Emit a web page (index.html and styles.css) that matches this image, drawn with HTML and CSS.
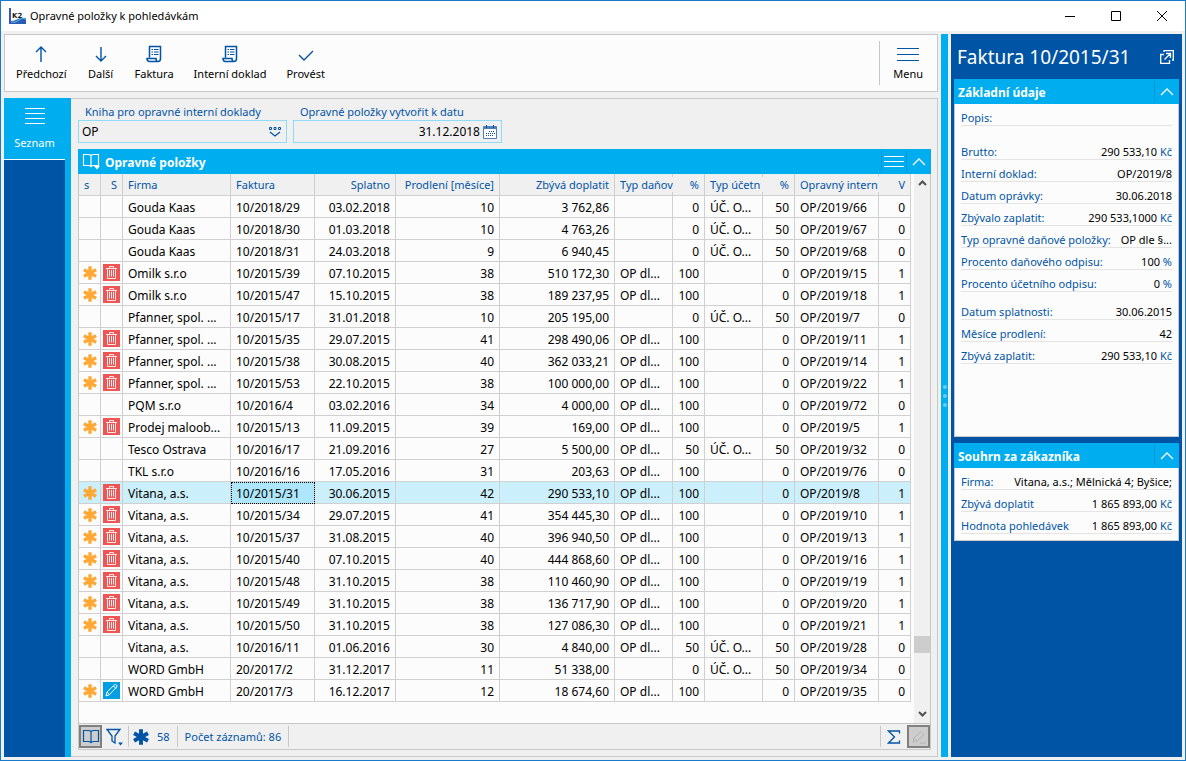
FILE: index.html
```html
<!DOCTYPE html>
<html lang="cs">
<head>
<meta charset="utf-8">
<meta name="viewport" content="width=device-width, initial-scale=1">
<title>Opravné položky k pohledávkám</title>
<link rel="stylesheet" href="styles.css">
</head>
<body>
<svg class="sprite" aria-hidden="true">
  <symbol id="star" viewBox="0 0 14 14"><path d="M7 .3v13.400M.9 3.700l12.200 6.600M.9 10.300l12.200-6.600" fill="none" stroke="currentColor" stroke-width="3.400"/></symbol>
  <symbol id="trash" viewBox="0 0 17 17"><path d="M0 0h17v17H0z" fill="#f05555"/><path d="M3 4.500h11M6.500 4V2.500h4V4M4.500 5v9.500h8V5M6.500 6v6.500M8.500 6v6.500M10.500 6v6.500" fill="none" stroke="#ffe9e9"/></symbol>
  <symbol id="pen" viewBox="0 0 17 17"><path d="M0 0h17v17H0z" fill="#009fe3"/><path d="M3 14l1-4 7.500-7.200q1-.8 2 .2t.2 2L6.500 12.700zM4 10l2.500 2.700M10.500 4l2.500 2.500" fill="none" stroke="#fff"/></symbol>
  <symbol id="doc" viewBox="0 0 16 18"><path d="M3.500 12.500V1.500h11v12q0 3-2.500 3H3q-2-.5-2-3h9q0 3 2 3" fill="none" stroke="currentColor" stroke-width="1.500"/><path d="M5.500 4.500h1.500M8 4.500h4.500M5.500 7h1.500M8 7h4.500M5.500 9.500h1.500M8 9.500h4.500" stroke="currentColor"/></symbol>
  <symbol id="up" viewBox="0 0 14 8"><path d="M1 7l6-6 6 6" fill="none" stroke="currentColor" stroke-width="1.300"/></symbol>
  <symbol id="book" viewBox="0 0 18 16"><path d="M9 2.500v11M9 2.500Q8 1.500 6 1.500H1.500v11H6q2 0 3 1 1-1 3-1h4.500v-11H12q-2 0-3 1z" fill="none" stroke="currentColor" stroke-width="1.200"/></symbol>
</svg>
<div class="window">
  <header class="titlebar">
    <svg class="logo" width="17" height="17" viewBox="0 0 17 17"><path d="M0 0h2v16H0z" fill="#3c50c8"/><path d="M2 13q4 0 7-2t8-1v6H2z" fill="#2a5cb4"/><path d="M2 14q5 1 8-2t7-1" fill="none" stroke="#5cc4e4"/><text x="3" y="10" class="logo-text">K2</text></svg>
    <h1>Opravné položky k pohledávkám</h1>
    <div class="win-buttons">
      <button type="button" aria-label="Minimalizovat"><svg width="12" height="12"><path d="M1 6.500h10" stroke="#000"/></svg></button>
      <button type="button" aria-label="Maximalizovat"><svg width="12" height="12"><path d="M1.500 1.500h9v9h-9z" fill="none" stroke="#000"/></svg></button>
      <button type="button" aria-label="Zavřít"><svg width="12" height="12"><path d="M1 1l10 10M11 1L1 11" stroke="#000"/></svg></button>
    </div>
  </header>
  <div class="workspace">
    <div class="left">
      <nav class="toolbar" aria-label="Akce">
        <button type="button"><svg width="16" height="18" viewBox="0 0 16 18"><path d="M8 17V2M3 7l5-5 5 5" fill="none" stroke="currentColor" stroke-width="1.400"/></svg>Předchozí</button>
        <button type="button"><svg width="16" height="18" viewBox="0 0 16 18"><path d="M8 2v14M3 11l5 5 5-5" fill="none" stroke="currentColor" stroke-width="1.400"/></svg>Další</button>
        <button type="button"><svg width="16" height="18"><use href="#doc"/></svg>Faktura</button>
        <button type="button"><svg width="16" height="18"><use href="#doc"/></svg>Interní doklad</button>
        <button type="button"><svg width="16" height="18" viewBox="0 0 16 18"><path d="M1 10l5 5 9-9" fill="none" stroke="currentColor" stroke-width="1.400"/></svg>Provést</button>
        <button type="button" class="menu"><svg width="22" height="18"><path d="M0 3.500h22M0 9.500h22M0 15.500h22" stroke="currentColor"/></svg>Menu</button>
      </nav>
      <div class="content">
        <nav class="sidebar" aria-label="Stránky">
          <a href="#seznam"><svg width="20" height="18"><path d="M0 1.500h20M0 6.500h20M0 11.500h20M0 16.500h20" stroke="#fff"/></svg>Seznam</a>
          <div class="side-fill"></div>
        </nav>
        <main class="main" id="seznam">
          <form class="fields">
            <div class="field">
              <label for="kniha">Kniha pro opravné interní doklady</label>
              <div class="box"><input id="kniha" type="text" value="OP"><button type="button" aria-label="Vybrat knihu"><svg width="14" height="12"><path d="M1.500 1.500h2v2h-2zM6 1.500h2v2H6zM10.500 1.500h2v2h-2z" fill="none" stroke="currentColor"/><path d="M2 6l5 4 5-4" fill="none" stroke="currentColor" stroke-width="1.300"/></svg></button></div>
            </div>
            <div class="field">
              <label for="datum">Opravné položky vytvořit k datu</label>
              <div class="box"><input id="datum" class="right" type="text" value="31.12.2018"><button type="button" aria-label="Kalendář"><svg width="14" height="14"><path d="M.5 1.500h13v12H.5z" fill="#fff" stroke="#4f7fb5"/><path d="M1 3h12" stroke="#4f7fb5" stroke-width="2"/><path d="M3.500 0v3M10.500 0v3" stroke="currentColor"/><path d="M6 6.500h6M3 8.500h9M3 10.500h7" stroke="currentColor" stroke-dasharray="1 1"/></svg></button></div>
            </div>
          </form>
          <section class="list">
            <header class="bar">
              <button type="button" class="bookbtn" aria-label="Kniha"><svg width="18" height="17"><use href="#book" height="16"/><path d="M12 13h6l-3 3.500z" fill="#fff"/></svg></button>
              <h2>Opravné položky</h2>
              <button type="button" class="tool" aria-label="Nabídka"><svg width="20" height="14"><path d="M0 1.500h20M0 6.500h20M0 11.500h20" stroke="currentColor"/></svg></button>
              <button type="button" class="tool" aria-label="Sbalit"><svg width="14" height="8"><use href="#up"/></svg></button>
            </header>
            <div class="grid">
              <div class="scroll">
                <table>
                  <colgroup><col class="w22"><col class="w22"><col class="w108"><col class="w84"><col class="w81"><col class="w104"><col class="w115"><col class="w58"><col class="w32"><col class="w58"><col class="w32"><col class="w84"><col class="w32"></colgroup>
                  <thead><tr><th>s</th><th>S</th><th>Firma</th><th>Faktura</th><th>Splatno</th><th>Prodlení [měsíce]</th><th>Zbývá doplatit</th><th class="joined">Typ daňov</th><th>%</th><th class="joined">Typ účetn</th><th>%</th><th class="joined">Opravný intern</th><th>V</th></tr></thead>
                  <tbody>
<tr><td></td><td></td><td>Gouda Kaas</td><td>10/2018/29</td><td>03.02.2018</td><td>10</td><td>3 762,86</td><td></td><td>0</td><td>ÚČ. O...</td><td>50</td><td>OP/2019/66</td><td>0</td></tr>
<tr><td></td><td></td><td>Gouda Kaas</td><td>10/2018/30</td><td>01.03.2018</td><td>10</td><td>4 763,26</td><td></td><td>0</td><td>ÚČ. O...</td><td>50</td><td>OP/2019/67</td><td>0</td></tr>
<tr><td></td><td></td><td>Gouda Kaas</td><td>10/2018/31</td><td>24.03.2018</td><td>9</td><td>6 940,45</td><td></td><td>0</td><td>ÚČ. O...</td><td>50</td><td>OP/2019/68</td><td>0</td></tr>
<tr><td><svg><use href="#star"/></svg></td><td><svg><use href="#trash"/></svg></td><td>Omilk s.r.o</td><td>10/2015/39</td><td>07.10.2015</td><td>38</td><td>510 172,30</td><td>OP dl...</td><td>100</td><td></td><td>0</td><td>OP/2019/15</td><td>1</td></tr>
<tr><td><svg><use href="#star"/></svg></td><td><svg><use href="#trash"/></svg></td><td>Omilk s.r.o</td><td>10/2015/47</td><td>15.10.2015</td><td>38</td><td>189 237,95</td><td>OP dl...</td><td>100</td><td></td><td>0</td><td>OP/2019/18</td><td>1</td></tr>
<tr><td></td><td></td><td>Pfanner, spol. ...</td><td>10/2015/17</td><td>31.01.2018</td><td>10</td><td>205 195,00</td><td></td><td>0</td><td>ÚČ. O...</td><td>50</td><td>OP/2019/7</td><td>0</td></tr>
<tr><td><svg><use href="#star"/></svg></td><td><svg><use href="#trash"/></svg></td><td>Pfanner, spol. ...</td><td>10/2015/35</td><td>29.07.2015</td><td>41</td><td>298 490,06</td><td>OP dl...</td><td>100</td><td></td><td>0</td><td>OP/2019/11</td><td>1</td></tr>
<tr><td><svg><use href="#star"/></svg></td><td><svg><use href="#trash"/></svg></td><td>Pfanner, spol. ...</td><td>10/2015/38</td><td>30.08.2015</td><td>40</td><td>362 033,21</td><td>OP dl...</td><td>100</td><td></td><td>0</td><td>OP/2019/14</td><td>1</td></tr>
<tr><td><svg><use href="#star"/></svg></td><td><svg><use href="#trash"/></svg></td><td>Pfanner, spol. ...</td><td>10/2015/53</td><td>22.10.2015</td><td>38</td><td>100 000,00</td><td>OP dl...</td><td>100</td><td></td><td>0</td><td>OP/2019/22</td><td>1</td></tr>
<tr><td></td><td></td><td>PQM s.r.o</td><td>10/2016/4</td><td>03.02.2016</td><td>34</td><td>4 000,00</td><td>OP dl...</td><td>100</td><td></td><td>0</td><td>OP/2019/72</td><td>0</td></tr>
<tr><td><svg><use href="#star"/></svg></td><td><svg><use href="#trash"/></svg></td><td>Prodej maloob...</td><td>10/2015/13</td><td>11.09.2015</td><td>39</td><td>169,00</td><td>OP dl...</td><td>100</td><td></td><td>0</td><td>OP/2019/5</td><td>1</td></tr>
<tr><td></td><td></td><td>Tesco Ostrava</td><td>10/2016/17</td><td>21.09.2016</td><td>27</td><td>5 500,00</td><td>OP dl...</td><td>50</td><td>ÚČ. O...</td><td>50</td><td>OP/2019/32</td><td>0</td></tr>
<tr><td></td><td></td><td>TKL s.r.o</td><td>10/2016/16</td><td>17.05.2016</td><td>31</td><td>203,63</td><td>OP dl...</td><td>100</td><td></td><td>0</td><td>OP/2019/76</td><td>0</td></tr>
<tr class="selected"><td><svg><use href="#star"/></svg></td><td><svg><use href="#trash"/></svg></td><td>Vitana, a.s.</td><td class="focus">10/2015/31</td><td>30.06.2015</td><td>42</td><td>290 533,10</td><td>OP dl...</td><td>100</td><td></td><td>0</td><td>OP/2019/8</td><td>1</td></tr>
<tr><td><svg><use href="#star"/></svg></td><td><svg><use href="#trash"/></svg></td><td>Vitana, a.s.</td><td>10/2015/34</td><td>29.07.2015</td><td>41</td><td>354 445,30</td><td>OP dl...</td><td>100</td><td></td><td>0</td><td>OP/2019/10</td><td>1</td></tr>
<tr><td><svg><use href="#star"/></svg></td><td><svg><use href="#trash"/></svg></td><td>Vitana, a.s.</td><td>10/2015/37</td><td>31.08.2015</td><td>40</td><td>396 940,50</td><td>OP dl...</td><td>100</td><td></td><td>0</td><td>OP/2019/13</td><td>1</td></tr>
<tr><td><svg><use href="#star"/></svg></td><td><svg><use href="#trash"/></svg></td><td>Vitana, a.s.</td><td>10/2015/40</td><td>07.10.2015</td><td>40</td><td>444 868,60</td><td>OP dl...</td><td>100</td><td></td><td>0</td><td>OP/2019/16</td><td>1</td></tr>
<tr><td><svg><use href="#star"/></svg></td><td><svg><use href="#trash"/></svg></td><td>Vitana, a.s.</td><td>10/2015/48</td><td>31.10.2015</td><td>38</td><td>110 460,90</td><td>OP dl...</td><td>100</td><td></td><td>0</td><td>OP/2019/19</td><td>1</td></tr>
<tr><td><svg><use href="#star"/></svg></td><td><svg><use href="#trash"/></svg></td><td>Vitana, a.s.</td><td>10/2015/49</td><td>31.10.2015</td><td>38</td><td>136 717,90</td><td>OP dl...</td><td>100</td><td></td><td>0</td><td>OP/2019/20</td><td>1</td></tr>
<tr><td><svg><use href="#star"/></svg></td><td><svg><use href="#trash"/></svg></td><td>Vitana, a.s.</td><td>10/2015/50</td><td>31.10.2015</td><td>38</td><td>127 086,30</td><td>OP dl...</td><td>100</td><td></td><td>0</td><td>OP/2019/21</td><td>1</td></tr>
<tr><td></td><td></td><td>Vitana, a.s.</td><td>10/2016/11</td><td>01.06.2016</td><td>30</td><td>4 840,00</td><td>OP dl...</td><td>50</td><td>ÚČ. O...</td><td>50</td><td>OP/2019/28</td><td>0</td></tr>
<tr><td></td><td></td><td>WORD GmbH</td><td>20/2017/2</td><td>31.12.2017</td><td>11</td><td>51 338,00</td><td></td><td>0</td><td>ÚČ. O...</td><td>50</td><td>OP/2019/34</td><td>0</td></tr>
<tr><td><svg><use href="#star"/></svg></td><td><svg><use href="#pen"/></svg></td><td>WORD GmbH</td><td>20/2017/3</td><td>16.12.2017</td><td>12</td><td>18 674,60</td><td>OP dl...</td><td>100</td><td></td><td>0</td><td>OP/2019/35</td><td>0</td></tr>
                  </tbody>
                </table>
              </div>
              <div class="scrollbar">
                <button type="button" aria-label="Nahoru"><svg width="9" height="6"><path d="M1 5l3.500-3.500L8 5" fill="none" stroke="#505050" stroke-width="2"/></svg></button>
                <div class="track"><span></span></div>
                <button type="button" aria-label="Dolů"><svg width="9" height="6"><path d="M1 1l3.500 3.500L8 1" fill="none" stroke="#505050" stroke-width="2"/></svg></button>
              </div>
            </div>
            <footer class="status">
              <button type="button" class="pressed" aria-label="Kniha"><svg width="18" height="16"><use href="#book"/></svg></button>
              <button type="button" class="filter" aria-label="Filtr"><svg width="18" height="18"><path d="M1 1.500h13L9 8v7l-3-2V8z" fill="none" stroke="currentColor" stroke-width="1.300"/><path d="M12 14.500h5l-2.500 3z" fill="currentColor"/></svg></button>
              <span class="marked"><svg width="16" height="16"><use href="#star"/></svg>58</span>
              <span class="count">Počet záznamů: 86</span>
              <button type="button" class="sum" aria-label="Součet"><svg width="14" height="14"><path d="M12.500 3.500v-2.500H1.500l6 6-6 6h11v-2.500" fill="none" stroke="currentColor" stroke-width="1.300"/></svg></button>
              <button type="button" class="pressed" aria-label="Upravit"><svg width="16" height="16"><path d="M2 13l1-4 7-6.500 3 3L6 12zM3 9l3 3M9 14h6" fill="none" stroke="#b4b4b4"/></svg></button>
            </footer>
          </section>
        </main>
      </div>
    </div>
    <div class="splitter"><i></i><i></i><i></i></div>
    <aside class="preview">
      <header class="preview-title">
        <h2>Faktura 10/2015/31</h2>
        <button type="button" aria-label="Otevřít"><svg width="14" height="14"><path d="M4 4.500H.7v8.800h8.800V10" fill="none" stroke="currentColor" stroke-width="1.300"/><path d="M4 2V.7h9.300v9.300H12M4.500 9.500l6-6M6 3.500h4.500V8" fill="none" stroke="currentColor" stroke-width="1.300"/></svg></button>
      </header>
      <section class="card tall">
        <header class="bar"><h3>Základní údaje</h3><button type="button" class="tool" aria-label="Sbalit"><svg width="14" height="8"><use href="#up"/></svg></button></header>
        <dl>
          <div class="group"><div><dt>Popis:</dt><dd></dd></div></div>
          <div class="group second">
            <div><dt>Brutto:</dt><dd>290 533,10 <em>Kč</em></dd></div>
            <div><dt>Interní doklad:</dt><dd>OP/2019/8</dd></div>
            <div><dt>Datum oprávky:</dt><dd>30.06.2018</dd></div>
            <div><dt>Zbývalo zaplatit:</dt><dd>290 533,1000 <em>Kč</em></dd></div>
            <div><dt>Typ opravné daňové položky:</dt><dd>OP dle §...</dd></div>
            <div><dt>Procento daňového odpisu:</dt><dd>100 <em>%</em></dd></div>
            <div><dt>Procento účetního odpisu:</dt><dd>0 <em>%</em></dd></div>
          </div>
          <div class="group third">
            <div><dt>Datum splatnosti:</dt><dd>30.06.2015</dd></div>
            <div><dt>Měsíce prodlení:</dt><dd>42</dd></div>
            <div><dt>Zbývá zaplatit:</dt><dd>290 533,10 <em>Kč</em></dd></div>
          </div>
        </dl>
      </section>
      <section class="card">
        <header class="bar"><h3>Souhrn za zákazníka</h3><button type="button" class="tool" aria-label="Sbalit"><svg width="14" height="8"><use href="#up"/></svg></button></header>
        <dl>
          <div class="group">
            <div><dt>Firma:</dt><dd>Vitana, a.s.; Mělnická 4; Byšice;</dd></div>
            <div><dt>Zbývá doplatit</dt><dd>1 865 893,00 <em>Kč</em></dd></div>
            <div><dt>Hodnota pohledávek</dt><dd>1 865 893,00 <em>Kč</em></dd></div>
          </div>
        </dl>
      </section>
    </aside>
  </div>
</div>
</body>
</html>
```
FILE: styles.css
```css
:root {
  --cyan: #00adef;
  --blue: #0054a6;
  --line: #c8c8c8;
  --gray: #f0f0f0;
  --paper: #fcfcfc;
}
* { box-sizing: border-box; }
body {
  margin: 0;
  font: 12px/16px "Noto Sans", "Open Sans", sans-serif;
  color: #000;
}
h1, h2, h3, dl, dd { margin: 0; font: inherit; }
em { font-style: normal; }
svg { display: block; flex: none; }
button { margin: 0; padding: 0; border: 0; background: none; font: inherit; color: inherit; display: flex; align-items: center; justify-content: center; }
.sprite { position: absolute; width: 0; height: 0; }

.window { min-height: 100vh; display: flex; flex-direction: column; border: 1px solid #1979ca; background: var(--gray); }
.titlebar { display: flex; align-items: center; height: 30px; padding-left: 8px; gap: 4px; background: #fff; }
.titlebar h1 { flex: 1; font-size: 11px; }
.logo-text { font: bold 7px "DejaVu Sans", sans-serif; fill: #222; }
.win-buttons { display: flex; }
.win-buttons button { width: 46px; height: 30px; }

.workspace { flex: 1; display: flex; padding: 3px; gap: 3px; }
.left { flex: 1; min-width: 0; display: flex; flex-direction: column; gap: 6px; }
.toolbar { display: flex; height: 58px; padding: 6px 1px; border: 1px solid var(--line); background: var(--paper); font-size: 11px; }
.toolbar button { flex-direction: column; gap: 3px; min-width: 48px; padding: 0 10px; }
.toolbar svg { color: var(--blue); }
.toolbar .menu { margin-left: auto; padding: 0 13px; border-left: 1px solid var(--line); }

.content { flex: 1; display: flex; }
.sidebar { width: 67px; padding-right: 6px; display: flex; flex-direction: column; background: var(--cyan); }
.sidebar a { display: flex; flex-direction: column; align-items: center; gap: 10px; height: 62px; padding-top: 9px; border-bottom: 1px solid #fff; color: #fff; font-size: 11px; text-decoration: none; }
.side-fill { flex: 1; background: var(--blue); }
.main { flex: 1; min-width: 0; display: flex; flex-direction: column; gap: 6px; padding: 5px 6px 6px 7px; border: 1px solid var(--line); border-left: 0; }

.fields { display: flex; gap: 6px; color: var(--blue); }
.field { width: 209px; }
.field label { display: block; padding-left: 7px; font-size: 11px; }
.box { display: flex; align-items: center; height: 23px; padding-right: 4px; border: 1px solid #8fdcfa; }
.box input { flex: 1; min-width: 0; height: 21px; padding: 0 3px; border: 0; background: none; font: inherit; color: #000; }
.box .right { text-align: right; }

.list { flex: 1; display: flex; flex-direction: column; }
.bar { display: flex; align-items: center; height: 25px; padding-left: 4px; background: var(--cyan); color: #fff; }
.bar h2, .bar h3 { flex: 1; padding-top: 2px; font-weight: bold; }
.bookbtn { margin-right: 5px; }
.tool { width: 25px; height: 21px; border-left: 1px solid #0097d6; }
.grid { flex: 1; display: flex; border: 1px solid var(--line); border-width: 0 1px; background: var(--paper); }
.scroll { flex: 1; min-width: 0; }
table { width: 100%; table-layout: fixed; border-collapse: separate; border-spacing: 0; }
th, td { height: 22px; padding: 2px 5px 0; overflow: hidden; white-space: nowrap; text-align: left; font-weight: normal; border: 1px solid #d0d0d0; border-width: 0 1px 1px 0; }
th { background: var(--gray); color: var(--blue); font-size: 11px; padding-top: 0; }
td:nth-child(-n+2) { padding: 0 2px; }
td:nth-child(5), td:nth-child(6), td:nth-child(7), td:nth-child(9), td:nth-child(11), td:nth-child(13),
th:nth-child(2), th:nth-child(5), th:nth-child(6), th:nth-child(7), th:nth-child(9), th:nth-child(11), th:nth-child(13) { text-align: right; }
.joined { padding-right: 0; border-right: 0; background: linear-gradient(#d0d0d0 3px, transparent 3px 18px, #d0d0d0 18px) right / 1px 100% no-repeat var(--gray); }
td svg { width: 17px; height: 17px; }
td:first-child svg { width: 14px; height: 14px; margin-left: 2px; color: #ffa834; }
.selected td { background: #cbeffb; }
.selected .focus { background: #aee6fb; outline: 1px dotted #000; outline-offset: -1px; }
.w22 { width: 22px; } .w32 { width: 32px; } .w58 { width: 58px; } .w81 { width: 81px; } .w84 { width: 84px; }
.w104 { width: 104px; } .w108 { width: 108px; } .w115 { width: 115px; }
.scrollbar { width: 16px; margin-left: 4px; display: flex; flex-direction: column; background: var(--gray); }
.scrollbar button { height: 18px; }
.track { flex: 1; display: grid; grid-template-rows: 444fr 17px 52fr; }
.track span { grid-row: 2; background: #cdcdcd; }

.status { display: flex; align-items: center; height: 27px; border: 1px solid var(--line); color: var(--blue); }
.status .pressed { width: 23px; height: 23px; border: 2px solid #808080; background: #cdcdcd; }
.filter { width: 26px; height: 21px; }
.marked, .count, .sum { display: flex; align-items: center; height: 21px; border-left: 1px solid var(--line); }
.marked { gap: 8px; padding: 0 7px 0 4px; }
.count { padding: 0 7px; border-right: 1px solid var(--line); }
.marked, .count { font-size: 11px; }
.sum { width: 27px; margin-left: auto; }

.splitter { width: 7px; display: flex; flex-direction: column; align-items: center; justify-content: center; gap: 5px; background: var(--cyan); }
.splitter i { width: 4px; height: 4px; border-radius: 50%; background: #66cef5; }

.preview { width: 231px; padding: 0 3px; display: flex; flex-direction: column; background: var(--blue); }
.preview-title { display: flex; align-items: center; justify-content: space-between; height: 45px; padding: 0 5px 0 3px; color: #fff; }
.preview-title h2 { font-size: 19px; line-height: 24px; }
.card { margin-bottom: 6px; background: var(--paper); border: 1px solid var(--line); border-top: 0; }
.card .bar { margin: 0 -1px; }
.card dl { padding: 0 6px 6px; font-size: 11px; }
.tall dl { padding-bottom: 72px; }
.group > div { display: flex; justify-content: space-between; height: 22px; padding-top: 6px; line-height: 15px; border-bottom: 1px solid #e4e4e4; white-space: nowrap; }
.second { margin-top: 12px; }
.third { margin-top: 6px; }
dt, dd em { color: var(--blue); }
```
